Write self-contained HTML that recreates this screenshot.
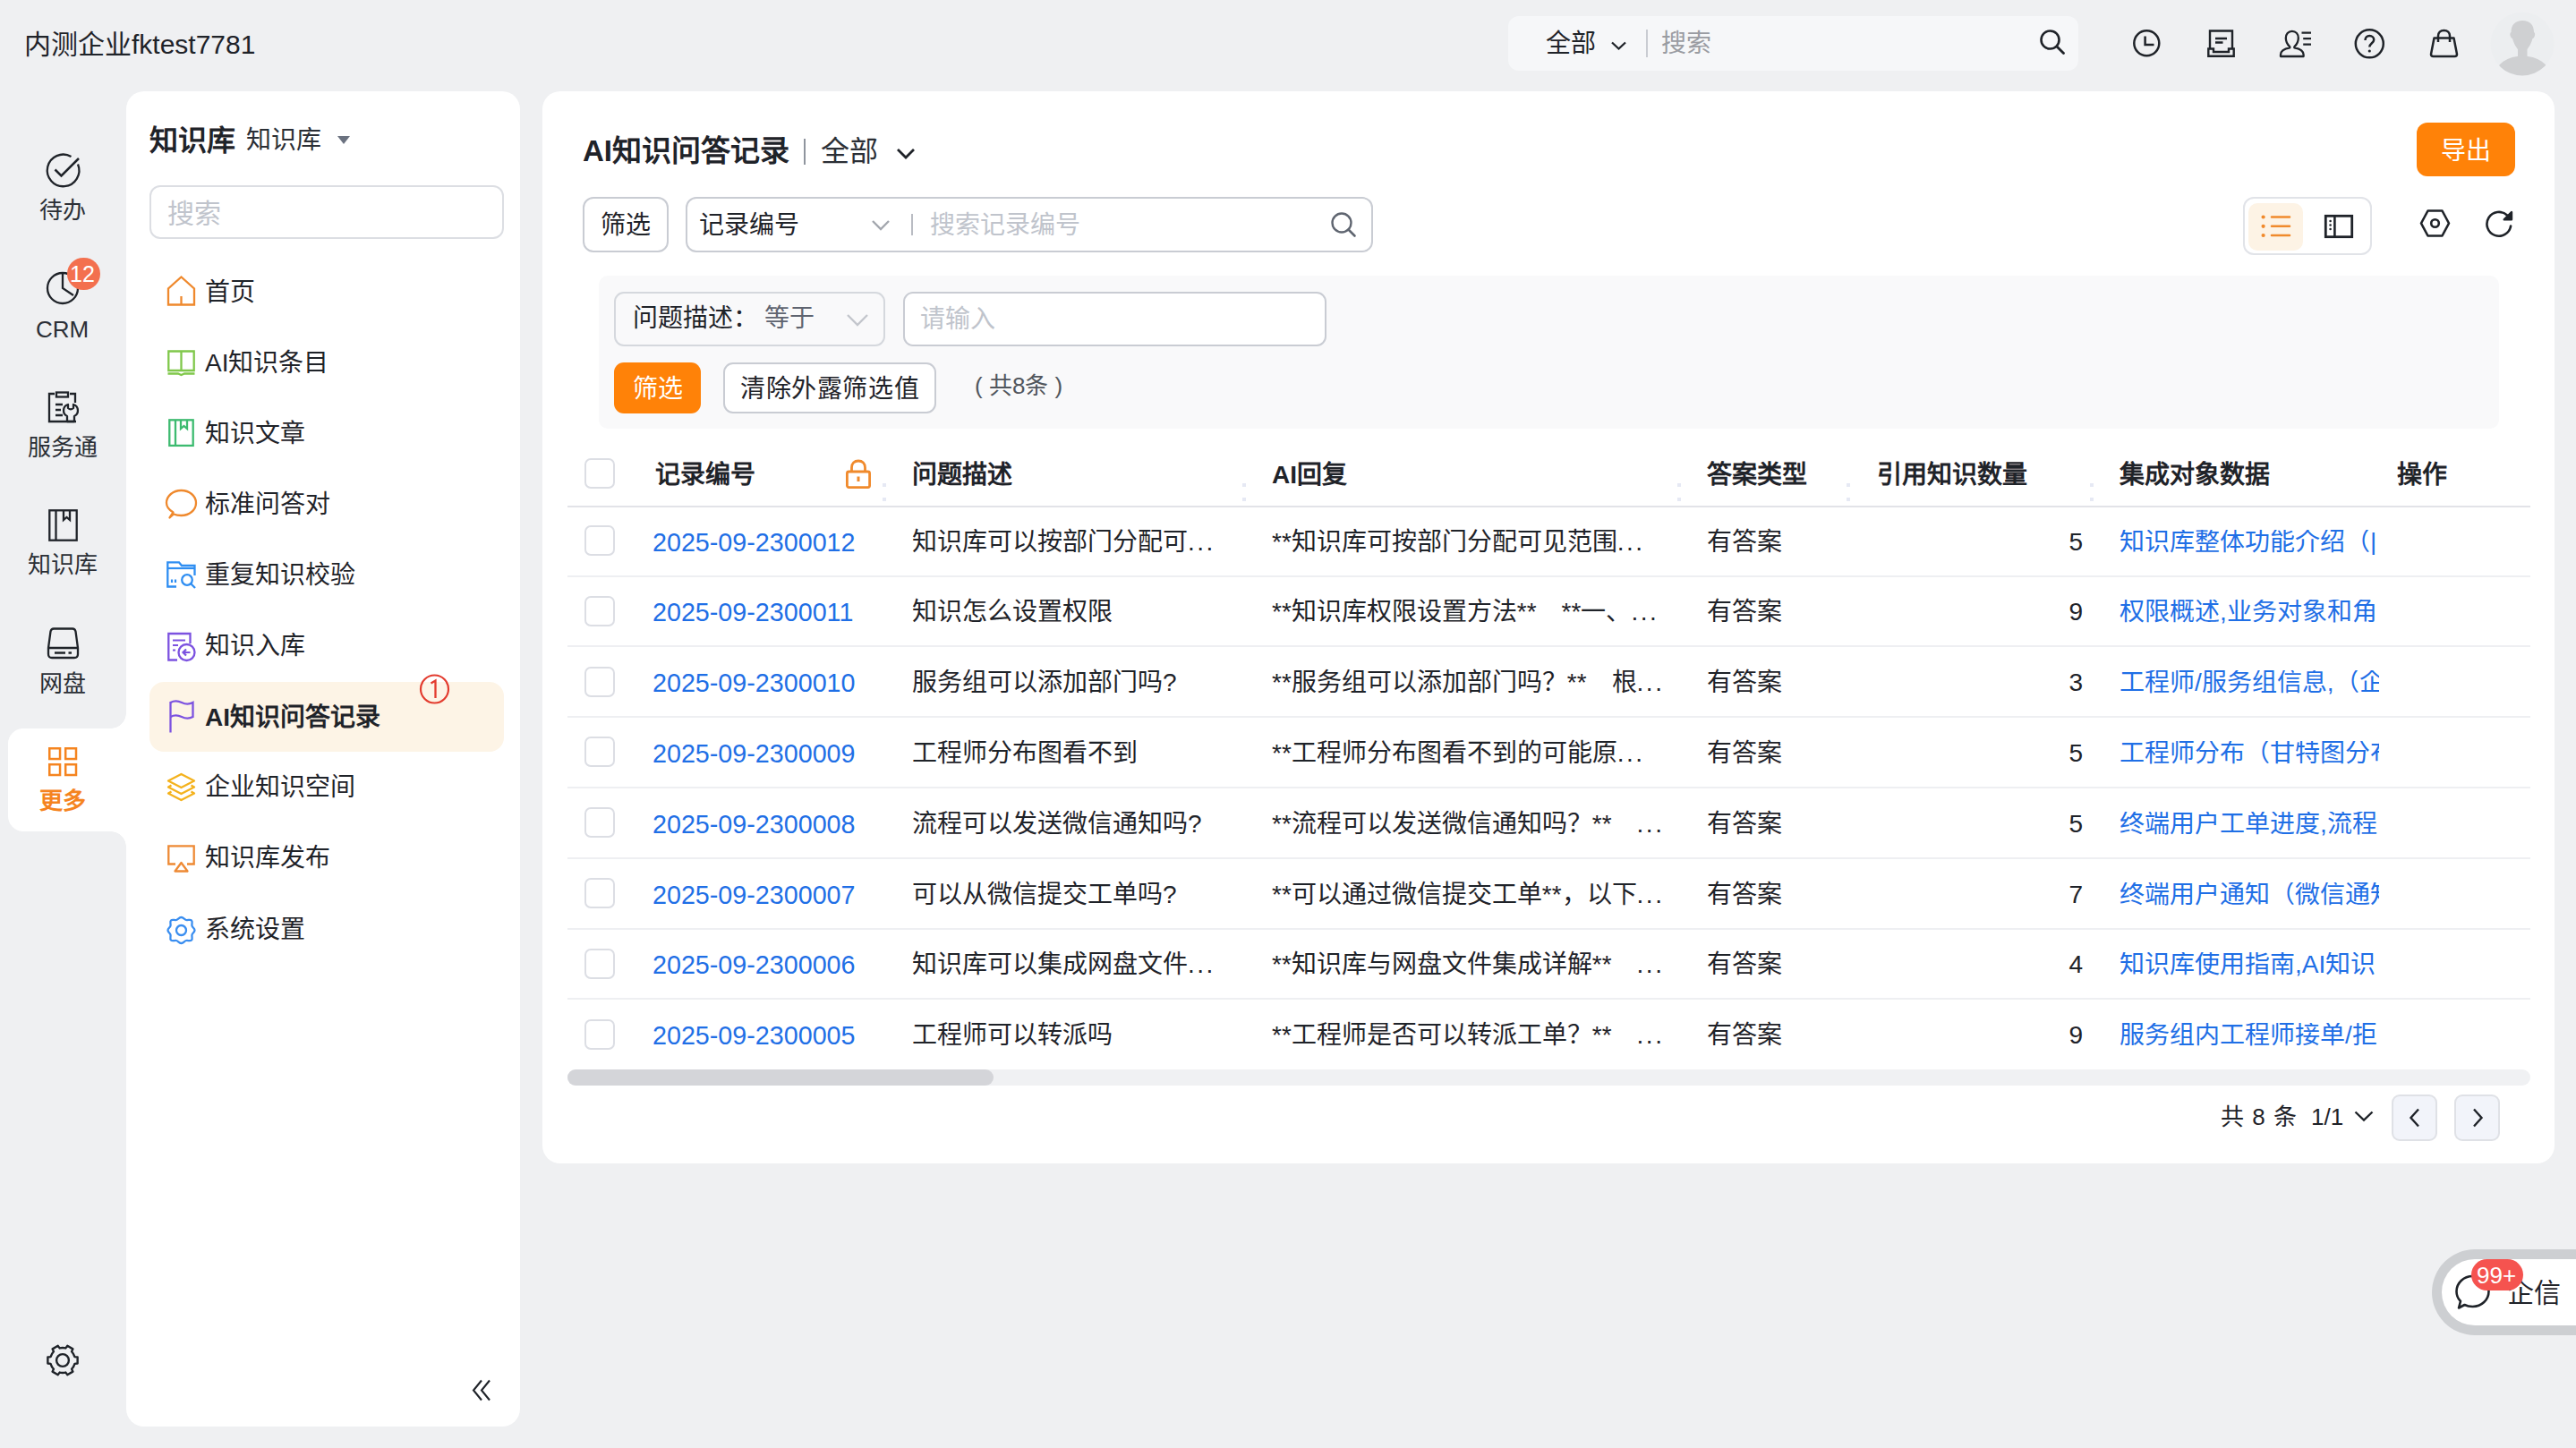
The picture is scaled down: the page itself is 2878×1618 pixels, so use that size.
<!DOCTYPE html>
<html lang="zh-CN">
<head>
<meta charset="utf-8">
<style>
*{box-sizing:border-box;margin:0;padding:0}
html,body{width:2878px;height:1618px;overflow:hidden}
body{background:#eff0f2;font-family:"Liberation Sans",sans-serif;color:#1f2329;position:relative}
.a{position:absolute}
.t{position:absolute;white-space:nowrap;line-height:1;margin-top:1px}
svg{position:absolute;overflow:visible}
.card{position:absolute;background:#fff}
.cb{width:34px;height:34px;border:2px solid #dcdee4;border-radius:7px;background:#fff}
.th{font-size:28px;font-weight:bold;color:#1f2329;margin-top:2px}
.td{font-size:28px;color:#1f2329}
.lk{color:#1f6fe6}
.id{font-size:28.7px}
.rz{width:4px;height:20px;background:linear-gradient(#e6e9f4 0 4px,transparent 4px 16px,#e6e9f4 16px)}
.pg{width:51px;height:52px;border:2px solid #dfe1e6;border-radius:9px;background:#f2f4fa}
</style>
</head>
<body>

<!-- TOP BAR -->
<div class="t" style="left:27px;top:34px;font-size:30px;color:#1f2329">内测企业fktest7781</div>

<div class="a" style="left:1685px;top:18px;width:637px;height:61px;background:#f6f7f9;border-radius:12px"></div>
<div class="t" style="left:1727px;top:34px;font-size:28px">全部</div>
<svg style="left:1799px;top:45px" width="20" height="12" viewBox="0 0 20 12"><path d="M2 2.5 L9.5 9.5 L17 2.5" fill="none" stroke="#1f2329" stroke-width="2.3"/></svg>
<div class="a" style="left:1839px;top:33px;width:2px;height:31px;background:#c9ccd2"></div>
<div class="t" style="left:1856px;top:34px;font-size:28px;color:#9a9ca2">搜索</div>
<svg style="left:2278px;top:32px" width="30" height="30" viewBox="0 0 30 30"><circle cx="12.5" cy="12.5" r="10" fill="none" stroke="#1f2329" stroke-width="2.6"/><path d="M20 20 L27.5 27.5" stroke="#1f2329" stroke-width="2.8" stroke-linecap="round"/></svg>

<!-- header icons -->
<svg style="left:2383px;top:33px" width="31" height="31" viewBox="0 0 31 31"><circle cx="15.3" cy="15.3" r="14" fill="none" stroke="#1f2329" stroke-width="2.5"/><path d="M13.6 7.5 V17 H23.5" fill="none" stroke="#1f2329" stroke-width="2.5"/></svg>
<svg style="left:2466px;top:33px" width="31" height="31" viewBox="0 0 31 31"><path d="M3 21.5 V1.5 H28 V21.5" fill="none" stroke="#1f2329" stroke-width="2.4"/><path d="M9 10 H22 M9 14.5 H17.5" stroke="#1f2329" stroke-width="2.4"/><path d="M1.3 21.5 H7 V25 H24 V21.5 H29.7 V29.7 H1.3 Z" fill="none" stroke="#1f2329" stroke-width="2.4" stroke-linejoin="miter"/></svg>
<svg style="left:2546px;top:33px" width="37" height="31" viewBox="0 0 37 31"><path d="M12.3 19.3 C8.8 16 7.8 13 7.8 9.5 C7.8 5 10.6 1.8 14.8 1.8 C19 1.8 21.8 5 21.8 9.5 C21.8 13 20.8 16 17.3 19.3 V20.3 C23.5 21.5 27.6 24.5 27.6 28 V30 H2 V28 C2 24.5 6 21.5 12.3 20.3 Z" fill="none" stroke="#1f2329" stroke-width="2.3" stroke-linejoin="round"/><path d="M25.5 3.7 H36 M27.2 10.2 H36 M27.2 16.7 H36" stroke="#1f2329" stroke-width="2.3"/></svg>
<svg style="left:2630px;top:32px" width="35" height="35" viewBox="0 0 35 35"><circle cx="17.3" cy="16.8" r="15.5" fill="none" stroke="#1f2329" stroke-width="2.5"/><path d="M12.5 13 C12.5 10 14.5 8 17.3 8 C20.2 8 22.2 10 22.2 12.5 C22.2 16 17.3 16.5 17.3 20.5" fill="none" stroke="#1f2329" stroke-width="2.5"/><circle cx="17.3" cy="25" r="1.6" fill="#1f2329"/></svg>
<svg style="left:2714px;top:32px" width="33" height="33" viewBox="0 0 33 33"><path d="M10 15 V8 C10 4.5 12.5 2 16.5 2 C20.5 2 23 4.5 23 8 V15" fill="none" stroke="#1f2329" stroke-width="2.5"/><path d="M5.5 10.5 H27.5 L31 28.5 C31 30 30 31 28.5 31 H4.5 C3 31 2 30 2 28.5 Z" fill="none" stroke="#1f2329" stroke-width="2.5" stroke-linejoin="round"/></svg>
<svg style="left:2782px;top:13px" width="72" height="72" viewBox="0 0 72 72"><defs><clipPath id="avc"><circle cx="36" cy="36" r="35.5"/></clipPath></defs><circle cx="36" cy="36" r="35.5" fill="#eceef0"/><g clip-path="url(#avc)" fill="#cfd0d2"><path d="M36.3 10 C28 10 23.5 15 23.5 23 C22 23.5 22 26 23 28 C23.5 29.5 24.5 30 25 30 C26.5 36 30 41 31 42 V53 H41.5 V42 C42.5 41 46 36 47.5 30 C48 30 49 29.5 49.5 28 C50.5 26 50.5 23.5 49 23 C49 15 44.5 10 36.3 10 Z"/><ellipse cx="36.3" cy="70" rx="30" ry="20.5"/></g></svg>

<!-- LEFT RAIL -->
<div class="card" style="left:9px;top:814px;width:140px;height:115px;border-radius:17px 0 0 17px"></div>
<div class="a" style="left:124px;top:797px;width:17px;height:17px;background:radial-gradient(circle at 0 0,#eff0f2 16.5px,#fff 17px)"></div>
<div class="a" style="left:124px;top:929px;width:17px;height:17px;background:radial-gradient(circle at 0 100%,#eff0f2 16.5px,#fff 17px)"></div>

<div class="t" style="left:44px;top:221px;font-size:26px;color:#2b2f36">待办</div>
<div class="t" style="left:40px;top:354px;font-size:26px;color:#2b2f36">CRM</div>
<div class="t" style="left:31px;top:486px;font-size:26px;color:#2b2f36">服务通</div>
<div class="t" style="left:31px;top:617px;font-size:26px;color:#2b2f36">知识库</div>
<div class="t" style="left:44px;top:750px;font-size:26px;color:#2b2f36">网盘</div>
<div class="t" style="left:44px;top:881px;font-size:26px;color:#f5841f;font-weight:bold">更多</div>


<!-- rail icons -->
<svg style="left:50px;top:168px" width="42" height="44" viewBox="0 0 42 44"><path d="M37 15.5 A17.8 17.8 0 1 1 29.5 7" fill="none" stroke="#1f2329" stroke-width="2.3"/><path d="M11.5 21.5 L18.5 28.5 L38 9" fill="none" stroke="#1f2329" stroke-width="2.5"/></svg>
<svg style="left:51px;top:303px" width="38" height="38" viewBox="0 0 38 38"><circle cx="19" cy="19" r="17" fill="none" stroke="#1f2329" stroke-width="2.3"/><path d="M19 2 V19 L31 27" fill="none" stroke="#1f2329" stroke-width="2.3"/></svg>
<div class="a" style="left:75px;top:288px;width:37px;height:36px;border-radius:18px;background:#f3704f"></div>
<div class="t" style="left:78px;top:293px;font-size:25px;color:#fff">12</div>
<svg style="left:52px;top:437px" width="38" height="36" viewBox="0 0 38 36"><path d="M9 3 H3 V34 H33" fill="none" stroke="#1f2329" stroke-width="2.3"/><path d="M26 3 H32 V13" fill="none" stroke="#1f2329" stroke-width="2.3"/><rect x="11" y="1.5" width="13" height="5" fill="none" stroke="#1f2329" stroke-width="2.3"/><path d="M10 15 H18 M10 21 H16 M10 27 H18" stroke="#1f2329" stroke-width="2.3"/><path d="M24 15 V19 A4.5 4.5 0 0 0 30 19 V15 A7 7 0 0 1 31 28 V34 H23 V28 A7 7 0 0 1 24 15 Z" fill="none" stroke="#1f2329" stroke-width="2.3" stroke-linejoin="round"/></svg>
<svg style="left:53px;top:568px" width="35" height="38" viewBox="0 0 35 38"><rect x="2.3" y="2.3" width="30.4" height="33.4" fill="none" stroke="#1f2329" stroke-width="2.3"/><path d="M9.5 2.3 V35.7" stroke="#1f2329" stroke-width="2.3"/><path d="M18 2.3 V13 L21.5 10 L25 13 V2.3" fill="none" stroke="#1f2329" stroke-width="2.3"/></svg>
<svg style="left:52px;top:700px" width="37" height="38" viewBox="0 0 37 38"><path d="M8 2.5 H29 C31 2.5 32 3.5 32.5 5.5 L35 24 V31 C35 33.5 33.5 35 31 35 H6 C3.5 35 2 33.5 2 31 V24 L4.5 5.5 C5 3.5 6 2.5 8 2.5 Z" fill="none" stroke="#1f2329" stroke-width="2.3"/><path d="M2 24 H35" stroke="#1f2329" stroke-width="2.3"/><path d="M9 29.5 H21 M24.5 29.5 H28" stroke="#1f2329" stroke-width="2.5"/></svg>
<svg style="left:54px;top:835px" width="33" height="33" viewBox="0 0 33 33"><rect x="1.25" y="1.25" width="11.8" height="11.8" fill="none" stroke="#f5841f" stroke-width="2.5"/><rect x="19.2" y="1.25" width="11.8" height="11.8" fill="none" stroke="#f5841f" stroke-width="2.5"/><rect x="1.25" y="19.2" width="11.8" height="11.8" fill="none" stroke="#f5841f" stroke-width="2.5"/><rect x="19.2" y="19.2" width="11.8" height="11.8" fill="none" stroke="#f5841f" stroke-width="2.5"/></svg>
<svg style="left:50px;top:1500px" width="40" height="40" viewBox="0 0 40 40"><path d="M33.46 16.14 L36.63 16.47 L36.63 23.53 L33.46 23.86 A14.0 14.0 0 0 1 30.07 29.73 L31.38 32.63 L25.25 36.17 L23.39 33.58 A14.0 14.0 0 0 1 16.61 33.58 L14.75 36.17 L8.62 32.63 L9.93 29.73 A14.0 14.0 0 0 1 6.54 23.86 L3.37 23.53 L3.37 16.47 L6.54 16.14 A14.0 14.0 0 0 1 9.93 10.27 L8.62 7.37 L14.75 3.83 L16.61 6.42 A14.0 14.0 0 0 1 23.39 6.42 L25.25 3.83 L31.38 7.37 L30.07 10.27 A14.0 14.0 0 0 1 33.46 16.14 Z" fill="none" stroke="#1f2329" stroke-width="2.4" stroke-linejoin="round"/><circle cx="20" cy="20" r="6.9" fill="none" stroke="#1f2329" stroke-width="2.4"/></svg>

<!-- NAV PANEL -->
<div class="card" style="left:141px;top:102px;width:440px;height:1492px;border-radius:20px"></div>
<div class="t" style="left:167px;top:140px;font-size:32px;font-weight:bold;color:#1f2329">知识库</div>
<div class="t" style="left:275px;top:142px;font-size:28px;color:#2b2f36">知识库</div>
<svg style="left:376px;top:151px" width="16" height="11" viewBox="0 0 16 11"><path d="M1 1 H15 L8 10 Z" fill="#6b7280"/></svg>
<div class="a" style="left:167px;top:207px;width:396px;height:60px;border:2px solid #dcdee3;border-radius:12px"></div>
<div class="t" style="left:187px;top:223px;font-size:30px;color:#c0c4cc">搜索</div>

<div class="a" style="left:167px;top:762px;width:396px;height:78px;background:#fdf4e6;border-radius:16px"></div>

<div class="t nav" style="left:229px;top:312px;font-size:28px">首页</div>
<div class="t nav" style="left:229px;top:391px;font-size:28px">AI知识条目</div>
<div class="t nav" style="left:229px;top:470px;font-size:28px">知识文章</div>
<div class="t nav" style="left:229px;top:549px;font-size:28px">标准问答对</div>
<div class="t nav" style="left:229px;top:628px;font-size:28px">重复知识校验</div>
<div class="t nav" style="left:229px;top:707px;font-size:28px">知识入库</div>
<div class="t nav" style="left:229px;top:787px;font-size:28px;font-weight:bold">AI知识问答记录</div>
<div class="t nav" style="left:229px;top:865px;font-size:28px">企业知识空间</div>
<div class="t nav" style="left:229px;top:944px;font-size:28px">知识库发布</div>
<div class="t nav" style="left:229px;top:1024px;font-size:28px">系统设置</div>


<!-- nav icons -->
<svg style="left:186px;top:308px" width="33" height="34" viewBox="0 0 33 34"><path d="M2 32.5 V14.5 L16.5 1.5 L31 14.5 V32.5 Z" fill="none" stroke="#ef892d" stroke-width="2.3" stroke-linejoin="miter"/><path d="M16.5 23 V32.5" stroke="#ef892d" stroke-width="2.3"/></svg>
<svg style="left:186px;top:391px" width="33" height="29" viewBox="0 0 33 29"><path d="M2.3 1.5 H16.5 V23 H2.3 Z M16.5 1.5 H30.7 V23 H16.5" fill="none" stroke="#80c84b" stroke-width="2.3"/><path d="M1.5 26.5 H13 L16.5 28 L20 26.5 H31.5" fill="none" stroke="#80c84b" stroke-width="2.3"/></svg>
<svg style="left:187px;top:467px" width="31" height="33" viewBox="0 0 31 33"><rect x="2.3" y="2.3" width="26.4" height="28.6" fill="none" stroke="#3dbb70" stroke-width="2.3"/><path d="M9 2.3 V30.9" stroke="#3dbb70" stroke-width="2.3"/><path d="M15 2.3 V12 L18.5 9 L22 12 V2.3" fill="none" stroke="#3dbb70" stroke-width="2.3"/></svg>
<svg style="left:184px;top:546px" width="37" height="35" viewBox="0 0 37 35"><path d="M5.5 32.5 L9.5 26.5 C4.5 23.5 2 19.5 2 16 C2 8 9.5 2 18.5 2 C27.5 2 35 8 35 16 C35 24 27.5 30 18.5 30 C15.5 30 12.5 29.5 10 28.5 Z" fill="none" stroke="#ef892d" stroke-width="2.3" stroke-linejoin="round"/></svg>
<svg style="left:185px;top:626px" width="36" height="33" viewBox="0 0 36 33"><path d="M12 29.5 H2.3 V2.3 H15 L18 6 H32.5 V17" fill="none" stroke="#2f8ef2" stroke-width="2.3"/><path d="M2.3 9 H32.5" stroke="#2f8ef2" stroke-width="2.2"/><circle cx="24" cy="22" r="5.8" fill="none" stroke="#2f8ef2" stroke-width="2.3"/><path d="M28.5 26.5 L33 31" stroke="#2f8ef2" stroke-width="2.3"/><path d="M7 21.5 V25 M11 21.5 V25" stroke="#2f8ef2" stroke-width="2.2"/></svg>
<svg style="left:186px;top:706px" width="34" height="34" viewBox="0 0 34 34"><path d="M12 31.5 H2.3 V2 H26.5 V13" fill="none" stroke="#7c52e0" stroke-width="2.3"/><path d="M7 9.5 H21 M7 15 H13 M7 20.5 H10" stroke="#7c52e0" stroke-width="2.2"/><circle cx="22.5" cy="23" r="9" fill="none" stroke="#7c52e0" stroke-width="2.3"/><path d="M26.5 23 H19 M22 19.5 L18.5 23 L22 26.5" fill="none" stroke="#7c52e0" stroke-width="2.2"/></svg>
<svg style="left:188px;top:782px" width="30" height="38" viewBox="0 0 30 38"><path d="M2.5 36.5 V2" stroke="#7c52e0" stroke-width="2.3"/><path d="M2.5 3 C7 0.5 11 1 15 3 C19 5 23 5.5 27.5 3 V19 C23 21.5 19 21 15 19 C11 17 7 16.5 2.5 19" fill="none" stroke="#7c52e0" stroke-width="2.3"/></svg>
<svg style="left:186px;top:863px" width="33" height="33" viewBox="0 0 33 33"><path d="M16.5 2 L31 9.5 L16.5 17 L2 9.5 Z" fill="none" stroke="#f4b21d" stroke-width="2.3" stroke-linejoin="round"/><path d="M5.5 14.5 L2 16.5 L16.5 24 L31 16.5 L27.5 14.5" fill="none" stroke="#f4b21d" stroke-width="2.3" stroke-linejoin="round"/><path d="M5.5 21.5 L2 23.5 L16.5 31 L31 23.5 L27.5 21.5" fill="none" stroke="#f4b21d" stroke-width="2.3" stroke-linejoin="round"/></svg>
<svg style="left:186px;top:943px" width="33" height="32" viewBox="0 0 33 32"><path d="M10 22.5 H2.3 V2.3 H30.7 V22.5 H23" fill="none" stroke="#ee8a35" stroke-width="2.3"/><path d="M16.5 21 L23.5 30.5 H9.5 Z" fill="none" stroke="#ee8a35" stroke-width="2.3" stroke-linejoin="round"/></svg>
<svg style="left:186px;top:1023px" width="33" height="33" viewBox="0 0 33 33"><path d="M16.5 2 C19 2 20 4.5 22 5 C24 5.5 26.5 4 28 5.5 C29.5 7 28 9.5 28.5 11.5 C29 13.5 31.5 14.5 31.5 16.5 C31.5 18.5 29 19.5 28.5 21.5 C28 23.5 29.5 26 28 27.5 C26.5 29 24 27.5 22 28 C20 28.5 19 31 16.5 31 C14 31 13 28.5 11 28 C9 27.5 6.5 29 5 27.5 C3.5 26 5 23.5 4.5 21.5 C4 19.5 1.5 18.5 1.5 16.5 C1.5 14.5 4 13.5 4.5 11.5 C5 9.5 3.5 7 5 5.5 C6.5 4 9 5.5 11 5 C13 4.5 14 2 16.5 2 Z" fill="none" stroke="#3a8ef0" stroke-width="2.3"/><circle cx="16.5" cy="16.5" r="5.5" fill="none" stroke="#3a8ef0" stroke-width="2.3"/></svg>
<svg style="left:468px;top:752px" width="36" height="36" viewBox="0 0 36 36"><circle cx="17.5" cy="18" r="15.5" fill="none" stroke="#e33b2e" stroke-width="2.2"/><path d="M13.5 11.5 L18.5 8.5 V28" fill="none" stroke="#e33b2e" stroke-width="2.3"/></svg>
<svg style="left:527px;top:1541px" width="22" height="25" viewBox="0 0 22 25"><path d="M11 1.5 L2 12.5 L11 23.5 M20 1.5 L11 12.5 L20 23.5" fill="none" stroke="#1f2329" stroke-width="2.1"/></svg>

<!-- MAIN CARD -->
<div class="card" style="left:606px;top:102px;width:2248px;height:1198px;border-radius:20px"></div>
<div class="t" style="left:651px;top:151px;font-size:33px;font-weight:bold">AI知识问答记录</div>
<div class="a" style="left:898px;top:155px;width:2px;height:29px;background:#8f959e"></div>
<div class="t" style="left:917px;top:152px;font-size:32px;color:#2b2f36">全部</div>
<svg style="left:1001px;top:164px" width="22" height="15" viewBox="0 0 22 15"><path d="M2 3 L11 12 L20 3" fill="none" stroke="#1f2329" stroke-width="2.8"/></svg>

<div class="a" style="left:2700px;top:137px;width:110px;height:60px;background:#ff8208;border-radius:12px"></div>
<div class="t" style="left:2727px;top:154px;font-size:28px;color:#fff">导出</div>


<!-- toolbar -->
<div class="a" style="left:651px;top:220px;width:96px;height:62px;border:2px solid #c9ccd3;border-radius:12px;background:#fff"></div>
<div class="t" style="left:671px;top:237px;font-size:28px">筛选</div>
<div class="a" style="left:766px;top:220px;width:768px;height:62px;border:2px solid #c9ccd3;border-radius:12px;background:#fff"></div>
<div class="t" style="left:781px;top:237px;font-size:28px">记录编号</div>
<svg style="left:973px;top:245px" width="22" height="14" viewBox="0 0 22 14"><path d="M2 2 L11 11 L20 2" fill="none" stroke="#a3a7ae" stroke-width="2.4"/></svg>
<div class="a" style="left:1018px;top:239px;width:2px;height:24px;background:#b9bcc3"></div>
<div class="t" style="left:1039px;top:237px;font-size:28px;color:#c0c4cc">搜索记录编号</div>
<svg style="left:1486px;top:236px" width="30" height="30" viewBox="0 0 30 30"><circle cx="13" cy="13" r="10.5" fill="none" stroke="#5f6570" stroke-width="2.4"/><path d="M20.5 20.5 L27.5 27.5" stroke="#5f6570" stroke-width="2.6" stroke-linecap="round"/></svg>

<div class="a" style="left:2506px;top:220px;width:144px;height:65px;border:2px solid #e1e3e8;border-radius:12px;background:#fff"></div>
<div class="a" style="left:2512px;top:227px;width:61px;height:53px;background:#fdf3e5;border-radius:10px"></div>
<svg style="left:2524px;top:238px" width="38" height="30" viewBox="0 0 38 30"><circle cx="4.6" cy="4.5" r="2.1" fill="#f08a2c"/><circle cx="4.6" cy="14.8" r="2.1" fill="#f08a2c"/><circle cx="4.6" cy="25" r="2.1" fill="#f08a2c"/><path d="M14 4.5 H34 M14 14.8 H34 M14 25 H34" stroke="#f08a2c" stroke-width="2.6" stroke-linecap="round"/></svg>
<svg style="left:2596px;top:239px" width="34" height="28" viewBox="0 0 34 28"><rect x="2.3" y="2.3" width="29.4" height="23.4" fill="none" stroke="#1f2329" stroke-width="2.8"/><path d="M12.4 2.3 V25.7" stroke="#1f2329" stroke-width="2.6"/><circle cx="7.6" cy="8" r="1.3" fill="#1f2329"/><circle cx="7.6" cy="12.5" r="1.3" fill="#1f2329"/><circle cx="7.6" cy="17" r="1.3" fill="#1f2329"/></svg>
<svg style="left:2703px;top:233px" width="35" height="33" viewBox="0 0 35 33"><path d="M9.5 2.5 H25.5 L33 16.5 L25.5 30.5 H9.5 L2 16.5 Z" fill="none" stroke="#1f2329" stroke-width="2.6" stroke-linejoin="round"/><circle cx="17.5" cy="16.5" r="4.3" fill="none" stroke="#1f2329" stroke-width="2.6"/></svg>
<svg style="left:2775px;top:233px" width="34" height="33" viewBox="0 0 34 33"><path d="M30.1 19.5 A13.4 13.4 0 1 1 26 7.5" fill="none" stroke="#1f2329" stroke-width="2.6" stroke-linecap="round"/><path d="M31 4 V12.3 H22.7 Z" fill="#1f2329" stroke="#1f2329" stroke-width="2.4" stroke-linejoin="round"/></svg>

<!-- filter panel -->
<div class="a" style="left:669px;top:308px;width:2123px;height:171px;background:#f9f9fa;border-radius:10px"></div>
<div class="a" style="left:686px;top:326px;width:303px;height:61px;border:2px solid #d5d8dd;border-radius:11px"></div>
<div class="t" style="left:707px;top:341px;font-size:28px">问题描述：</div>
<div class="t" style="left:854px;top:341px;font-size:28px;color:#5f6470">等于</div>
<svg style="left:945px;top:350px" width="26" height="16" viewBox="0 0 26 16"><path d="M2 2 L13 13 L24 2" fill="none" stroke="#c3c6cc" stroke-width="2.4"/></svg>
<div class="a" style="left:1009px;top:326px;width:473px;height:61px;border:2px solid #c9ccd3;border-radius:11px;background:#fff"></div>
<div class="t" style="left:1028px;top:342px;font-size:28px;color:#c0c4cc">请输入</div>
<div class="a" style="left:686px;top:405px;width:97px;height:57px;background:#ff8208;border-radius:11px"></div>
<div class="t" style="left:707px;top:420px;font-size:28px;color:#fff">筛选</div>
<div class="a" style="left:808px;top:405px;width:238px;height:57px;border:2px solid #c9ccd3;border-radius:11px;background:#fff"></div>
<div class="t" style="left:827px;top:420px;font-size:28px;letter-spacing:0.6px">清除外露筛选值</div>
<div class="t" style="left:1089px;top:417px;font-size:26px;color:#51565d">( 共8条 )</div>

<!-- table -->
<div class="a cb" style="left:653px;top:512px"></div>
<div class="t th" style="left:732px;top:515px">记录编号</div>
<div class="t th" style="left:1019px;top:515px">问题描述</div>
<div class="t th" style="left:1421px;top:515px">AI回复</div>
<div class="t th" style="left:1907px;top:515px">答案类型</div>
<div class="t th" style="left:2097px;top:515px">引用知识数量</div>
<div class="t th" style="left:2368px;top:515px">集成对象数据</div>
<div class="t th" style="left:2678px;top:515px">操作</div>
<svg style="left:944px;top:513px" width="30" height="34" viewBox="0 0 30 34"><path d="M7.5 14 V9.5 C7.5 5 10.5 2 15 2 C19.5 2 22.5 5 22.5 9.5 V14" fill="none" stroke="#f08a2c" stroke-width="2.8"/><rect x="2.4" y="14" width="25.2" height="17.6" rx="2" fill="none" stroke="#f08a2c" stroke-width="2.8"/><path d="M15 19.5 V25" stroke="#f08a2c" stroke-width="3"/></svg>
<div class="a rz" style="left:986px;top:540px"></div>
<div class="a rz" style="left:1388px;top:540px"></div>
<div class="a rz" style="left:1874px;top:540px"></div>
<div class="a rz" style="left:2063px;top:540px"></div>
<div class="a rz" style="left:2335px;top:540px"></div>
<div class="a" style="left:634px;top:565px;width:2193px;height:2px;background:#e2e3e8"></div>
<div class="a cb" style="left:653px;top:587.0px"></div>
<div class="t td lk id" style="left:729px;top:590.5px">2025-09-2300012</div>
<div class="t td" style="left:1019px;top:590.5px">知识库可以按部门分配可<span style="letter-spacing:2.5px">...</span></div>
<div class="t td" style="left:1421px;top:590.5px">**知识库可按部门分配可见范围<span style="letter-spacing:2.5px">...</span></div>
<div class="t td" style="left:1907px;top:590.5px">有答案</div>
<div class="t td" style="left:2307px;top:590.5px;width:20px;text-align:right">5</div>
<div class="t td lk" style="left:2368px;top:590.5px;width:290px;overflow:hidden">知识库整体功能介绍（|</div>
<div class="a" style="left:634px;top:642.5px;width:2193px;height:2px;background:#eeeff2"></div>
<div class="a cb" style="left:653px;top:665.8px"></div>
<div class="t td lk id" style="left:729px;top:669.3px">2025-09-2300011</div>
<div class="t td" style="left:1019px;top:669.3px">知识怎么设置权限</div>
<div class="t td" style="left:1421px;top:669.3px">**知识库权限设置方法**　**一、<span style="letter-spacing:2.5px">...</span></div>
<div class="t td" style="left:1907px;top:669.3px">有答案</div>
<div class="t td" style="left:2307px;top:669.3px;width:20px;text-align:right">9</div>
<div class="t td lk" style="left:2368px;top:669.3px;width:290px;overflow:hidden">权限概述,业务对象和角</div>
<div class="a" style="left:634px;top:721.3px;width:2193px;height:2px;background:#eeeff2"></div>
<div class="a cb" style="left:653px;top:744.6px"></div>
<div class="t td lk id" style="left:729px;top:748.1px">2025-09-2300010</div>
<div class="t td" style="left:1019px;top:748.1px">服务组可以添加部门吗?</div>
<div class="t td" style="left:1421px;top:748.1px">**服务组可以添加部门吗？**　根<span style="letter-spacing:2.5px">...</span></div>
<div class="t td" style="left:1907px;top:748.1px">有答案</div>
<div class="t td" style="left:2307px;top:748.1px;width:20px;text-align:right">3</div>
<div class="t td lk" style="left:2368px;top:748.1px;width:290px;overflow:hidden">工程师/服务组信息,（企</div>
<div class="a" style="left:634px;top:800.1px;width:2193px;height:2px;background:#eeeff2"></div>
<div class="a cb" style="left:653px;top:823.4px"></div>
<div class="t td lk id" style="left:729px;top:826.9px">2025-09-2300009</div>
<div class="t td" style="left:1019px;top:826.9px">工程师分布图看不到</div>
<div class="t td" style="left:1421px;top:826.9px">**工程师分布图看不到的可能原<span style="letter-spacing:2.5px">...</span></div>
<div class="t td" style="left:1907px;top:826.9px">有答案</div>
<div class="t td" style="left:2307px;top:826.9px;width:20px;text-align:right">5</div>
<div class="t td lk" style="left:2368px;top:826.9px;width:290px;overflow:hidden">工程师分布（甘特图分布）</div>
<div class="a" style="left:634px;top:878.9px;width:2193px;height:2px;background:#eeeff2"></div>
<div class="a cb" style="left:653px;top:902.2px"></div>
<div class="t td lk id" style="left:729px;top:905.7px">2025-09-2300008</div>
<div class="t td" style="left:1019px;top:905.7px">流程可以发送微信通知吗?</div>
<div class="t td" style="left:1421px;top:905.7px">**流程可以发送微信通知吗？**　<span style="letter-spacing:2.5px">...</span></div>
<div class="t td" style="left:1907px;top:905.7px">有答案</div>
<div class="t td" style="left:2307px;top:905.7px;width:20px;text-align:right">5</div>
<div class="t td lk" style="left:2368px;top:905.7px;width:290px;overflow:hidden">终端用户工单进度,流程</div>
<div class="a" style="left:634px;top:957.7px;width:2193px;height:2px;background:#eeeff2"></div>
<div class="a cb" style="left:653px;top:981.0px"></div>
<div class="t td lk id" style="left:729px;top:984.5px">2025-09-2300007</div>
<div class="t td" style="left:1019px;top:984.5px">可以从微信提交工单吗?</div>
<div class="t td" style="left:1421px;top:984.5px">**可以通过微信提交工单**，以下<span style="letter-spacing:2.5px">...</span></div>
<div class="t td" style="left:1907px;top:984.5px">有答案</div>
<div class="t td" style="left:2307px;top:984.5px;width:20px;text-align:right">7</div>
<div class="t td lk" style="left:2368px;top:984.5px;width:290px;overflow:hidden">终端用户通知（微信通知）</div>
<div class="a" style="left:634px;top:1036.5px;width:2193px;height:2px;background:#eeeff2"></div>
<div class="a cb" style="left:653px;top:1059.8px"></div>
<div class="t td lk id" style="left:729px;top:1063.3px">2025-09-2300006</div>
<div class="t td" style="left:1019px;top:1063.3px">知识库可以集成网盘文件<span style="letter-spacing:2.5px">...</span></div>
<div class="t td" style="left:1421px;top:1063.3px">**知识库与网盘文件集成详解**　<span style="letter-spacing:2.5px">...</span></div>
<div class="t td" style="left:1907px;top:1063.3px">有答案</div>
<div class="t td" style="left:2307px;top:1063.3px;width:20px;text-align:right">4</div>
<div class="t td lk" style="left:2368px;top:1063.3px;width:290px;overflow:hidden">知识库使用指南,AI知识</div>
<div class="a" style="left:634px;top:1115.3px;width:2193px;height:2px;background:#eeeff2"></div>
<div class="a cb" style="left:653px;top:1138.6px"></div>
<div class="t td lk id" style="left:729px;top:1142.1px">2025-09-2300005</div>
<div class="t td" style="left:1019px;top:1142.1px">工程师可以转派吗</div>
<div class="t td" style="left:1421px;top:1142.1px">**工程师是否可以转派工单？**　<span style="letter-spacing:2.5px">...</span></div>
<div class="t td" style="left:1907px;top:1142.1px">有答案</div>
<div class="t td" style="left:2307px;top:1142.1px;width:20px;text-align:right">9</div>
<div class="t td lk" style="left:2368px;top:1142.1px;width:290px;overflow:hidden">服务组内工程师接单/拒</div>
<div class="a" style="left:634px;top:1195px;width:2193px;height:18px;background:#f0f1f3;border-radius:9px"></div>
<div class="a" style="left:634px;top:1195px;width:476px;height:18px;background:#d4d5d9;border-radius:9px"></div>
<div class="t" style="left:2481px;top:1234px;font-size:26px;letter-spacing:1px">共 8 条</div>
<div class="t" style="left:2582px;top:1234px;font-size:26px">1/1</div>
<svg style="left:2629px;top:1240px" width="24" height="15" viewBox="0 0 24 15"><path d="M2.5 2.5 L12 11.5 L21.5 2.5" fill="none" stroke="#1f2329" stroke-width="2.4"/></svg>
<div class="a pg" style="left:2672px;top:1223px"></div>
<div class="a pg" style="left:2742px;top:1223px"></div>
<svg style="left:2688px;top:1237px" width="20" height="24" viewBox="0 0 20 24"><path d="M14 2.5 L5.5 12 L14 21.5" fill="none" stroke="#1f2329" stroke-width="2.4"/></svg>
<svg style="left:2758px;top:1237px" width="20" height="24" viewBox="0 0 20 24"><path d="M6 2.5 L14.5 12 L6 21.5" fill="none" stroke="#1f2329" stroke-width="2.4"/></svg>
<div class="a" style="left:2717px;top:1396px;width:220px;height:96px;border-radius:48px;background:#cdcfd2"></div>
<div class="a" style="left:2728px;top:1407px;width:220px;height:74px;border-radius:37px;background:#fff"></div>
<svg style="left:2742px;top:1424px" width="42" height="40" viewBox="0 0 42 40"><path d="M5 37.5 L7 30 C4 27 2.5 23 2.5 19 C2.5 9.5 10.5 2 20.5 2 C30.5 2 38.5 9.5 38.5 19 C38.5 28.5 30.5 36 20.5 36 C17 36 14 35.3 11.5 34 Z" fill="none" stroke="#1f2329" stroke-width="2.6" stroke-linejoin="round"/></svg>
<div class="t" style="left:2801px;top:1429px;font-size:30px">企信</div>
<div class="a" style="left:2761px;top:1407px;width:58px;height:35px;border-radius:17.5px;background:#f5534f"></div>
<div class="t" style="left:2767px;top:1411px;font-size:26px;color:#fff">99+</div>
</body>
</html>
